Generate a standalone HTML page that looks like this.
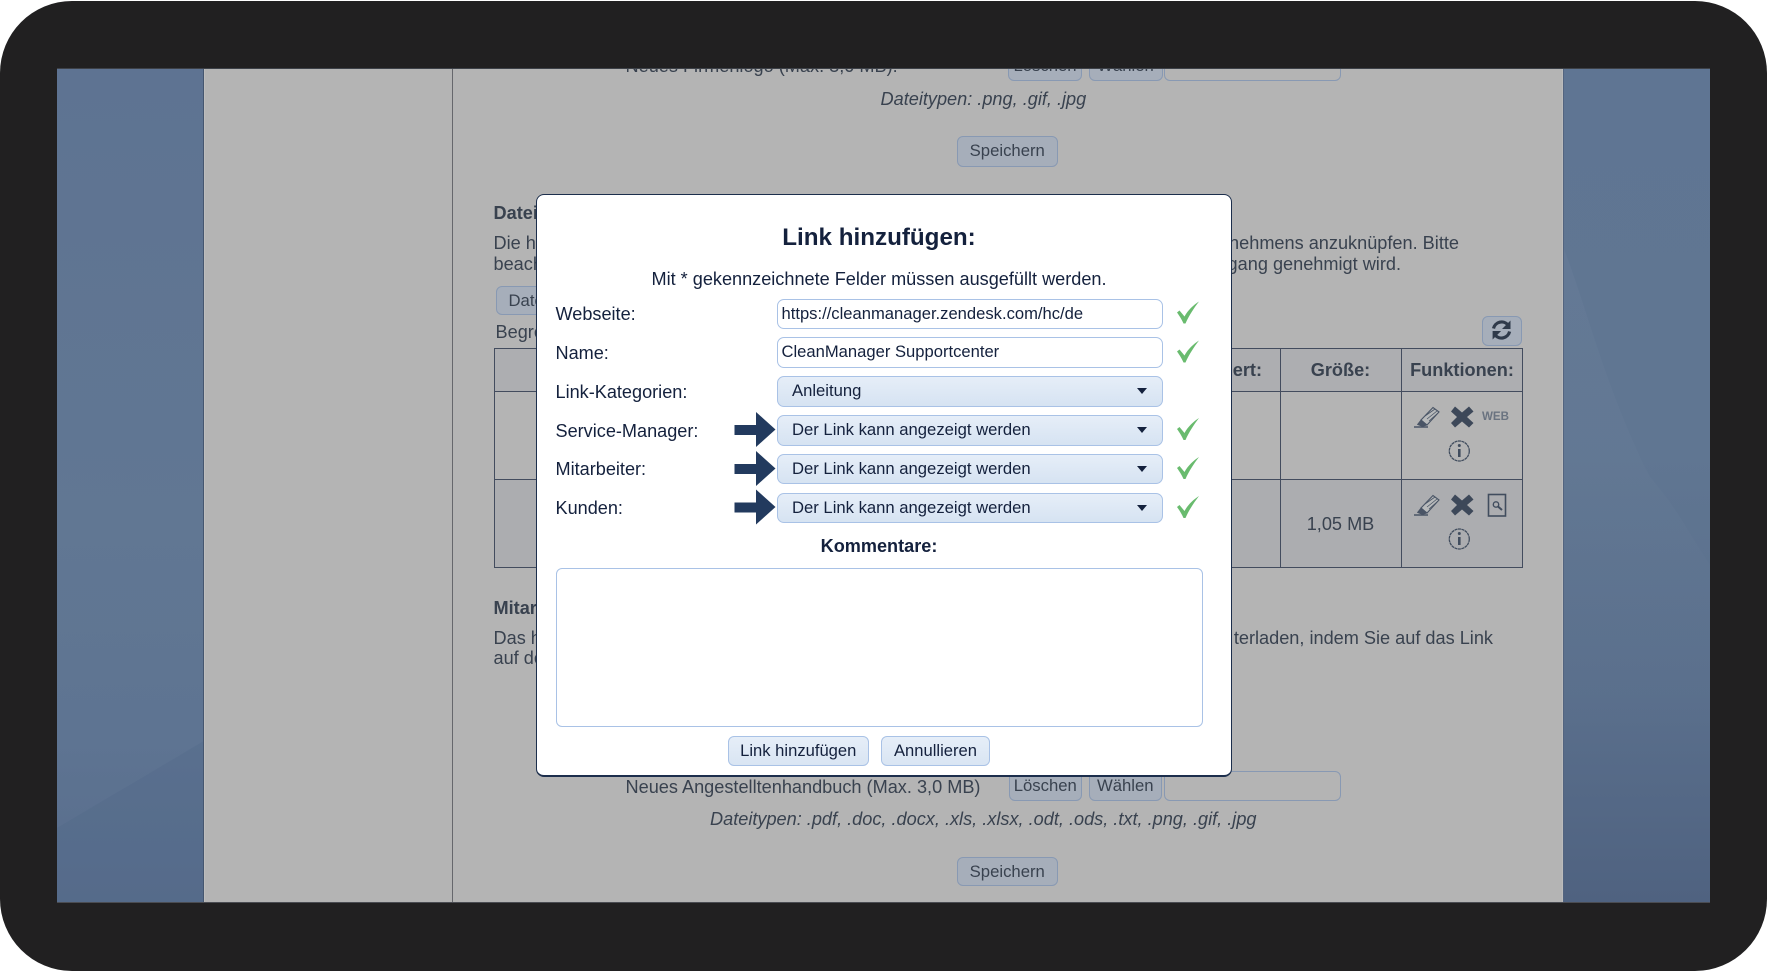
<!DOCTYPE html>
<html lang="de"><head><meta charset="utf-8"><title>Link hinzufügen</title>
<style>
html,body{margin:0;padding:0;background:#fff}
body{width:1767px;height:971px;overflow:hidden;position:relative;font-family:"Liberation Sans",Arial,sans-serif}
#frame{position:absolute;left:0;top:1px;width:1767px;height:970px;background:#212021;border-radius:72px}
#screen{position:absolute;left:57px;top:68px;width:1653px;height:835px;overflow:hidden;background:#b4b4b4}
#screen>*{position:absolute}
.t{position:absolute;white-space:nowrap;line-height:20px;font-size:18.15px;color:#39424f}
.b{font-weight:bold}
.i{font-style:italic}
.btn{position:absolute;box-sizing:border-box;border:1px solid #8899b3;border-radius:6px;background:#a6aeba;color:#39424f;font-size:16.7px;text-align:center}
#modal{position:absolute;left:536px;top:194px;width:696px;height:583px;box-sizing:border-box;background:#fff;border:1px solid #1c2e4c;border-bottom-width:2px;border-radius:8px}
.m{position:absolute;white-space:nowrap;line-height:20px;font-size:18.13px;color:#14213d}
.f{position:absolute;left:776.5px;width:386.5px;height:30.5px;box-sizing:border-box;border:1.5px solid #a9c2e6;border-radius:7px;background:#fff;font-size:16.6px;color:#14213d;line-height:27px;padding-left:4px;white-space:nowrap}
.s{background:linear-gradient(#e6eef8,#d6e3f2);padding-left:14.5px;font-size:16.65px}
.s:after{content:"";position:absolute;right:15.5px;top:11px;border-left:5.5px solid transparent;border-right:5.5px solid transparent;border-top:6.5px solid #14213d}
.mb{position:absolute;box-sizing:border-box;top:735.5px;height:30.5px;border:1.5px solid #a9c2e6;border-radius:6px;background:linear-gradient(#e6eef8,#d9e5f3);font-size:16.6px;color:#14213d;text-align:center;line-height:27px}
svg{position:absolute;overflow:visible}
</style></head>
<body>
<div id="frame"></div>
<div id="screen">
  <div style="left:0;top:0;width:147px;height:835px;background:linear-gradient(#5e7392,#617793 55%,#5e7492 80%,#586d8c)"></div>
  <div style="left:1506px;top:0;width:147px;height:835px;background:linear-gradient(#5f7593,#607692 45%,#5a6f8c 75%,#4f6280)"></div>
  <svg style="left:0;top:0" width="1653" height="835" viewBox="0 0 1653 835">
    <defs>
      <linearGradient id="g1" x1="0" y1="0" x2="0" y2="1"><stop offset="0" stop-color="#8a9aae" stop-opacity=".1"/><stop offset="1" stop-color="#8a9aae" stop-opacity="0"/></linearGradient>
    </defs>
    <path d="M1507 181C1530 240 1550 325 1593 409C1620 440 1635 470 1653 497V680H1507Z" fill="url(#g1)"/>
    <path d="M0 760L147 673V835H0Z" fill="#4f6687" fill-opacity=".3"/>
  </svg>
  <div style="left:146px;top:0;width:1px;height:835px;background:#45566f"></div>
  <div style="left:147px;top:0;width:1px;height:835px;background:#bdbdbd"></div>
  <div style="left:395px;top:0;width:1px;height:835px;background:#66676c"></div>
  <div style="left:1506px;top:0;width:1px;height:835px;background:#53647f"></div>
  <div style="left:1505px;top:0;width:1px;height:835px;background:#bcbcbc"></div>
  <div style="left:0;top:0;width:1653px;height:1px;background:#3d4148"></div>
  <div style="left:0;top:834px;width:1653px;height:1px;background:#4a4c52"></div>
</div>

<div id="bgclip" style="position:absolute;left:57px;top:69px;width:1653px;height:834px;overflow:hidden">
<div style="position:absolute;left:-57px;top:-69px;width:1767px;height:971px">
  <div class="t" style="left:625.5px;top:56px">Neues Firmenlogo (Max. 3,0 MB):</div>
  <div class="btn" style="left:1008px;top:51px;width:74px;height:30px;line-height:27px">Löschen</div>
  <div class="btn" style="left:1088.5px;top:51px;width:74px;height:30px;line-height:27px">Wählen</div>
  <div class="btn" style="left:1164px;top:51px;width:177px;height:30px;background:#b4b4b4"></div>
  <div class="t i" style="left:880.5px;top:89px">Dateitypen: .png, .gif, .jpg</div>
  <div class="btn" style="left:957px;top:136px;width:100.5px;height:30.5px;line-height:28px">Speichern</div>

  <div class="t b" style="left:493.5px;top:203px">Dateien</div>
  <div class="t" style="left:493.5px;top:233px">Die hier</div>
  <div class="t" style="left:493.5px;top:254px">beachten</div>
  <div class="t" style="right:308px;top:233px">nehmens anzuknüpfen. Bitte</div>
  <div class="t" style="right:366px;top:254px">gang genehmigt wird.</div>
  <div class="btn" style="left:495.5px;top:285.5px;width:100px;height:29px;line-height:27px;text-align:left;padding-left:12px">Datei</div>
  <div class="t" style="left:495.5px;top:321.5px">Begrenzung</div>

  <div class="btn" style="left:1481.5px;top:316px;width:40.5px;height:29.5px"></div>
  <svg style="left:0;top:0" width="1767" height="971">
    <g fill="none" stroke="#2f3a4a" stroke-width="3.2">
      <path d="M1493.5 328.5a8.3 8.3 0 0 1 14.5-3.5"/>
      <path d="M1509.6 331.5a8.3 8.3 0 0 1-14.5 3.5"/>
    </g>
    <path d="M1510.5 320.5v8.5h-8.5Z M1492.6 339.5v-8.5h8.5Z" fill="#2f3a4a"/>
  </svg>

  <div style="position:absolute;left:494px;top:348px;width:1028.5px;height:219.5px;box-sizing:border-box;border:1.2px solid #434c5e">
    <div style="position:absolute;left:0;top:0;right:0;height:41.5px;background:#adaeb1;border-bottom:1.2px solid #434c5e"></div>
    <div style="position:absolute;left:0;top:130px;right:0;bottom:0;background:#acadb0;border-top:1.2px solid #434c5e"></div>
    <div style="position:absolute;left:784.5px;top:0;bottom:0;width:1.2px;background:#434c5e"></div>
    <div style="position:absolute;left:905.5px;top:0;bottom:0;width:1.2px;background:#434c5e"></div>
  </div>
  <div class="t b" style="right:505px;top:360px">ert:</div>
  <div class="t b" style="left:1280px;width:121px;text-align:center;top:360px">Größe:</div>
  <div class="t b" style="left:1401.5px;width:121px;text-align:center;top:360px">Funktionen:</div>
  <div class="t" style="left:1280px;width:121px;text-align:center;top:514px">1,05 MB</div>

  <svg style="left:0;top:0" width="1767" height="971">
    <defs>
      <g id="pen" fill="none" stroke="#4a5566">
        <path d="M1421 420L1433 407.5L1439 412L1427 425Z" stroke-width="1.1" fill="#b8babb"/>
        <path d="M1425 416L1435 409M1427 419L1437 411M1429 421L1438 413" stroke-width=".8"/>
        <path d="M1421 420L1417.5 424.5L1422.5 426.5L1427 425Z" fill="#4a5566" stroke-width=".8"/>
        <path d="M1414 427H1428" stroke-width="1.5"/>
      </g>
      <path id="x" d="M1451 411.5L1455 406.5L1462 412.5L1469 406.5L1473.5 411.5L1467 417L1473.5 423L1469 427.5L1462 421.5L1455 427.5L1451 423L1457 417Z" fill="#3d4859"/>
      <g id="info">
        <circle cx="1459.3" cy="451" r="10" fill="none" stroke="#414d5e" stroke-width="1.3" stroke-dasharray="3 .5"/>
        <circle cx="1459.3" cy="445.5" r="1.5" fill="#414d5e"/>
        <path d="M1459.3 449v8" stroke="#414d5e" stroke-width="2.6"/>
      </g>
    </defs>
    <use href="#pen"/><use href="#x"/><use href="#info"/>
    <use href="#pen" y="88"/><use href="#x" y="88"/><use href="#info" y="88"/>
    <text x="1482" y="420" font-family="Liberation Sans" font-size="11.5" font-weight="bold" fill="#6a7380" textLength="27" lengthAdjust="spacingAndGlyphs">WEB</text>
    <rect x="1488.5" y="494.5" width="17" height="21.5" fill="none" stroke="#414d5e" stroke-width="1.6"/>
    <circle cx="1496" cy="504.5" r="2.7" fill="none" stroke="#414d5e" stroke-width="1.4"/>
    <path d="M1498 506.5L1502 510" stroke="#414d5e" stroke-width="2"/>
  </svg>

  <div class="t b" style="left:493.5px;top:598px">Mitarbeiter</div>
  <div class="t" style="left:493.5px;top:628px">Das hier</div>
  <div class="t" style="left:493.5px;top:648px">auf dem</div>
  <div class="t" style="right:274px;top:628px">terladen, indem Sie auf das Link</div>

  <div class="t" style="left:625.5px;top:777px">Neues Angestelltenhandbuch (Max. 3,0 MB)</div>
  <div class="btn" style="left:1008.5px;top:771px;width:73.5px;height:30px;line-height:28px">Löschen</div>
  <div class="btn" style="left:1088.5px;top:771px;width:73.5px;height:30px;line-height:28px">Wählen</div>
  <div class="btn" style="left:1164px;top:771px;width:177px;height:30px;background:#b4b4b4"></div>
  <div class="t i" style="left:710px;top:809px">Dateitypen: .pdf, .doc, .docx, .xls, .xlsx, .odt, .ods, .txt, .png, .gif, .jpg</div>
  <div class="btn" style="left:957px;top:856.5px;width:100.5px;height:29.5px;line-height:28px">Speichern</div>
</div>
</div>

<div id="modal"></div>
<div class="m b" style="left:536px;width:686px;text-align:center;top:228px;font-size:24.2px">Link hinzufügen:</div>
<div class="m" style="left:536px;width:686px;text-align:center;padding-left:0;top:269px">Mit * gekennzeichnete Felder müssen ausgefüllt werden.</div>

<div class="m" style="left:555.5px;top:303.5px">Webseite:</div>
<div class="m" style="left:555.5px;top:342.5px">Name:</div>
<div class="m" style="left:555.5px;top:381.5px">Link-Kategorien:</div>
<div class="m" style="left:555.5px;top:420.5px">Service-Manager:</div>
<div class="m" style="left:555.5px;top:459px">Mitarbeiter:</div>
<div class="m" style="left:555.5px;top:498px">Kunden:</div>

<div class="f" style="top:298.5px">https://cleanmanager.zendesk.com/hc/de</div>
<div class="f" style="top:337px">CleanManager Supportcenter</div>
<div class="f s" style="top:376px">Anleitung</div>
<div class="f s" style="top:415px">Der Link kann angezeigt werden</div>
<div class="f s" style="top:453.5px">Der Link kann angezeigt werden</div>
<div class="f s" style="top:492.5px">Der Link kann angezeigt werden</div>

<svg style="left:0;top:0" width="1767" height="971">
  <defs>
    <path id="arr" d="M734.5 425H756V412L775.5 429.5L756 447V435H734.5Z" fill="#223a5e"/>
    <path id="chk" d="M1177 312.5L1179.5 310.5L1184.5 316.5C1188 310 1193.5 305 1199 301.5C1194 308 1189 315.5 1185.5 323.5H1183.5C1181.5 319 1179.5 316 1177 312.5Z" fill="#69bb6e"/>
  </defs>
  <use href="#arr"/><use href="#arr" y="39"/><use href="#arr" y="77.5"/>
  <use href="#chk"/><use href="#chk" y="39"/><use href="#chk" y="116.5"/><use href="#chk" y="155.5"/><use href="#chk" y="194.5"/>
</svg>

<div class="m b" style="left:536px;width:686px;text-align:center;top:536px">Kommentare:</div>
<div style="position:absolute;left:555.5px;top:568px;width:647px;height:159px;box-sizing:border-box;border:1.5px solid #a9c2e6;border-radius:6px;background:#fff"></div>
<div class="mb" style="left:727.5px;width:141.5px">Link hinzufügen</div>
<div class="mb" style="left:881px;width:109px">Annullieren</div>
</body></html>
